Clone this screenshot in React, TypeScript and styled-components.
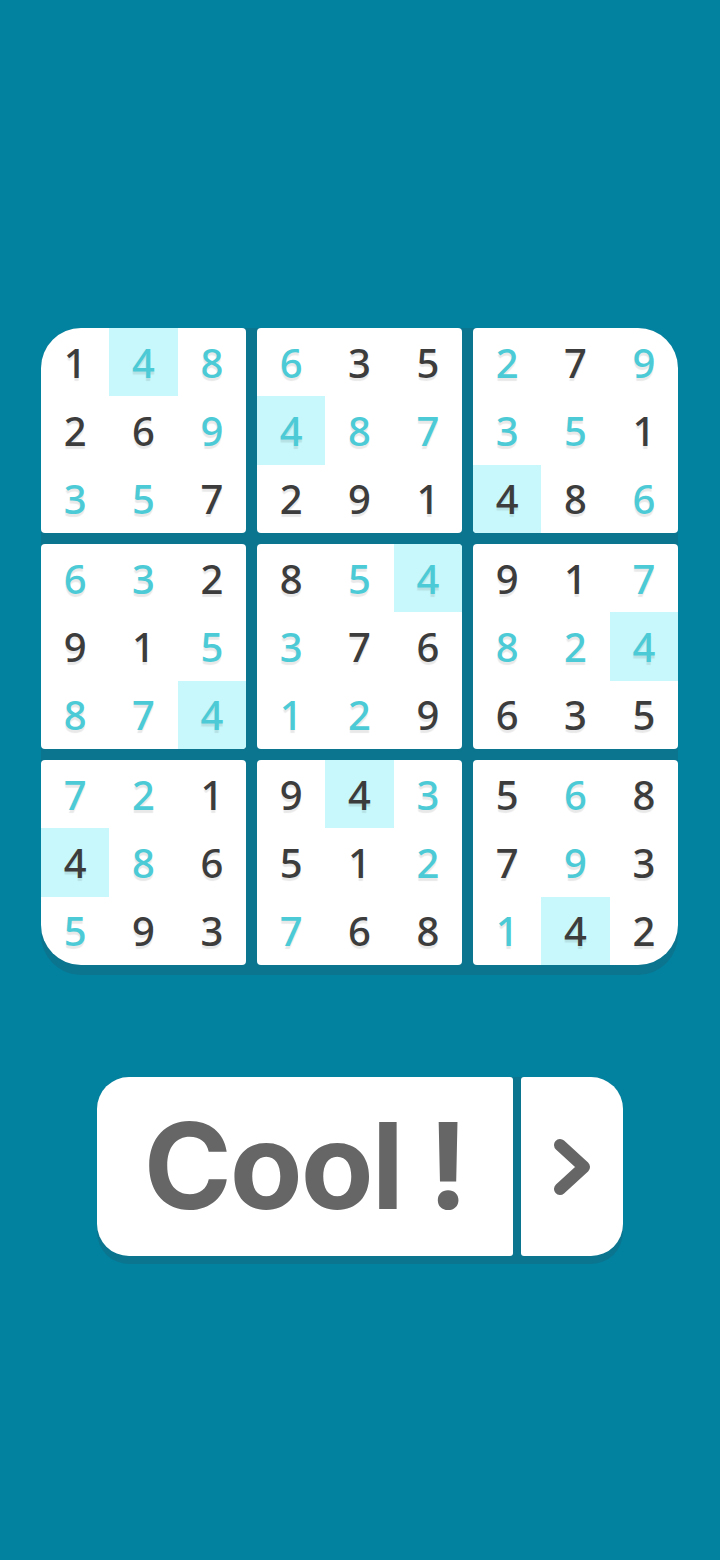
import React from "react";
import styled, { createGlobalStyle } from "styled-components";

const Global = createGlobalStyle`
  html, body { margin: 0; padding: 0; background: #03829f; }
  #root { min-height: 1560px; }
`;

const Page = styled.div`
  width: 720px;
  height: 1560px;
  background: #03829f;
  display: flex;
  flex-direction: column;
  align-items: flex-start;
  padding: 328px 0 0 41px;
  box-sizing: border-box;
`;

const Board = styled.div`
  width: 637px;
  display: grid;
  grid-template-columns: repeat(3, 205px);
  grid-template-rows: repeat(3, 205px);
  gap: 11px;
  background: #0b7590;
  border-radius: 40px;
  box-shadow: 0 10px 0 #0b7590;
`;

type Corner = "tl" | "tr" | "bl" | "br" | "none";

const Block = styled.div<{ $corner: Corner }>`
  background: #ffffff;
  display: grid;
  grid-template-columns: repeat(3, 1fr);
  grid-template-rows: repeat(3, 1fr);
  overflow: hidden;
  border-radius: ${({ $corner }) =>
    $corner === "tl"
      ? "40px 4px 4px 4px"
      : $corner === "tr"
      ? "4px 40px 4px 4px"
      : $corner === "bl"
      ? "4px 4px 4px 40px"
      : $corner === "br"
      ? "4px 4px 40px 4px"
      : "4px"};
`;

const Cell = styled.div<{ $cyan: boolean; $hl: boolean }>`
  display: flex;
  align-items: center;
  justify-content: center;
  background: ${({ $hl }) => ($hl ? "#c8f8fb" : "transparent")};
  color: ${({ $cyan }) => ($cyan ? "#4ccbd6" : "#3c3c3c")};
  font-family: "Noto Sans", "DejaVu Sans", sans-serif;
  font-weight: 500;
  font-size: 40px;
  line-height: 1;
  text-shadow: 0 3px 1px rgba(0, 0, 0, 0.09);
  padding-top: 1px;
`;

const ButtonRow = styled.div`
  margin: 112px 0 0 56px;
  display: flex;
  gap: 8px;
  background: #0b7590;
  border-radius: 32px;
  box-shadow: 0 8px 0 #0b7590;
`;

const CoolButton = styled.div`
  width: 416px;
  height: 179px;
  background: #ffffff;
  border-radius: 32px 3px 3px 32px;
  display: flex;
  align-items: center;
  justify-content: center;
  font-family: Inter, "Liberation Sans", sans-serif;
  font-weight: 700;
  font-size: 119px;
  color: #666666;
  letter-spacing: -2px;
  padding-bottom: 2px;
  box-sizing: border-box;
`;

const NextButton = styled.div`
  width: 102px;
  height: 179px;
  background: #ffffff;
  border-radius: 3px 32px 32px 3px;
  display: flex;
  align-items: center;
  justify-content: center;
`;

type C = [number, boolean, boolean];

const blocks: { corner: Corner; cells: C[] }[] = [
  {
    corner: "tl",
    cells: [
      [1, false, false], [4, true, true], [8, true, false],
      [2, false, false], [6, false, false], [9, true, false],
      [3, true, false], [5, true, false], [7, false, false],
    ],
  },
  {
    corner: "none",
    cells: [
      [6, true, false], [3, false, false], [5, false, false],
      [4, true, true], [8, true, false], [7, true, false],
      [2, false, false], [9, false, false], [1, false, false],
    ],
  },
  {
    corner: "tr",
    cells: [
      [2, true, false], [7, false, false], [9, true, false],
      [3, true, false], [5, true, false], [1, false, false],
      [4, false, true], [8, false, false], [6, true, false],
    ],
  },
  {
    corner: "none",
    cells: [
      [6, true, false], [3, true, false], [2, false, false],
      [9, false, false], [1, false, false], [5, true, false],
      [8, true, false], [7, true, false], [4, true, true],
    ],
  },
  {
    corner: "none",
    cells: [
      [8, false, false], [5, true, false], [4, true, true],
      [3, true, false], [7, false, false], [6, false, false],
      [1, true, false], [2, true, false], [9, false, false],
    ],
  },
  {
    corner: "none",
    cells: [
      [9, false, false], [1, false, false], [7, true, false],
      [8, true, false], [2, true, false], [4, true, true],
      [6, false, false], [3, false, false], [5, false, false],
    ],
  },
  {
    corner: "bl",
    cells: [
      [7, true, false], [2, true, false], [1, false, false],
      [4, false, true], [8, true, false], [6, false, false],
      [5, true, false], [9, false, false], [3, false, false],
    ],
  },
  {
    corner: "none",
    cells: [
      [9, false, false], [4, false, true], [3, true, false],
      [5, false, false], [1, false, false], [2, true, false],
      [7, true, false], [6, false, false], [8, false, false],
    ],
  },
  {
    corner: "br",
    cells: [
      [5, false, false], [6, true, false], [8, false, false],
      [7, false, false], [9, true, false], [3, false, false],
      [1, true, false], [4, false, true], [2, false, false],
    ],
  },
];

export default function App() {
  return (
    <>
      <Global />
      <Page>
        <Board>
          {blocks.map((b, bi) => (
            <Block key={bi} $corner={b.corner}>
              {b.cells.map(([n, cyan, hl], ci) => (
                <Cell key={ci} $cyan={cyan} $hl={hl}>
                  {n}
                </Cell>
              ))}
            </Block>
          ))}
        </Board>
        <ButtonRow>
          <CoolButton>Cool !</CoolButton>
          <NextButton>
            <svg width="40" height="60" viewBox="0 0 40 60">
              <path
                d="M8 8 L32 30 L8 52"
                fill="none"
                stroke="#666666"
                strokeWidth="12"
                strokeLinecap="round"
                strokeLinejoin="round"
              />
            </svg>
          </NextButton>
        </ButtonRow>
      </Page>
    </>
  );
}
